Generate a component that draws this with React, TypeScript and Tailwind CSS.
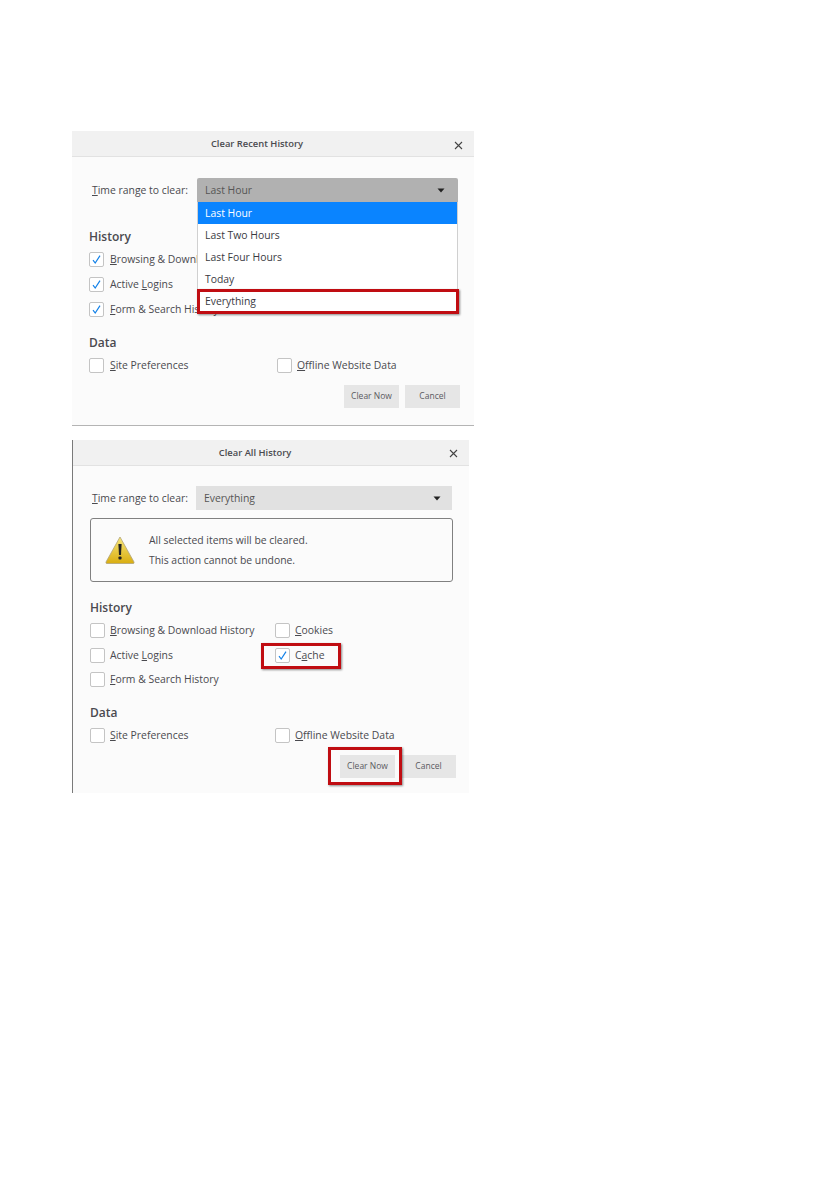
import React from "react";

const font = { fontFamily: '"Open Sans", "Noto Sans", sans-serif' };

function Check({ checked = false }: { checked?: boolean }) {
  return (
    <span className="relative flex h-[15px] w-[15px] shrink-0 items-center justify-center rounded-[2px] border border-[#c4c4c4] bg-white">
      {checked && (
        <svg width="11" height="11" viewBox="0 0 11 11" fill="none">
          <path d="M2 6.2 L4.2 9 L9 1.6" stroke="#1482e8" strokeWidth="1.2" />
        </svg>
      )}
    </span>
  );
}

function Opt({ checked, pre, u, post, w, tight }: { checked?: boolean; pre?: string; u: string; post: string; w: string; tight?: boolean }) {
  return (
    <div className={`flex items-center ${tight ? "gap-[5px]" : "gap-[6px]"} ${w}`}>
      <Check checked={checked} />
      <span className="whitespace-nowrap text-[10.4px] leading-[15px] text-[#4a4a4f]">
        {pre}
        <span className="underline">{u}</span>
        {post}
      </span>
    </div>
  );
}

function Header({ title }: { title: string }) {
  return (
    <div className="relative flex h-[26px] items-center justify-center border-b border-[#e2e2e2] bg-[#f1f1f1] pr-[32px] pt-[2px]">
      <span className="text-[9.4px] font-semibold text-[#4a4a4f]">{title}</span>
    </div>
  );
}

function Close({ cls }: { cls: string }) {
  return (
    <svg className={`absolute ${cls}`} width="9" height="9" viewBox="0 0 9 9" fill="none">
      <path d="M1 1 L8 8 M8 1 L1 8" stroke="#444" strokeWidth="1.1" />
    </svg>
  );
}

function Caret() {
  return (
    <svg width="8" height="5" viewBox="0 0 8 5">
      <path d="M0.5 0.5 H7.5 L4 4.5 Z" fill="#222" />
    </svg>
  );
}

function Btn({ label }: { label: string }) {
  return (
    <span className="flex h-[23px] w-[55px] items-center justify-center bg-[#e6e6e6] text-[8.5px] text-[#5a5a5f]">
      {label}
    </span>
  );
}

function Label() {
  return (
    <span className="block whitespace-nowrap text-[10.4px] leading-[15px] text-[#4a4a4f]">
      <span className="underline">T</span>ime range to clear:
    </span>
  );
}

function Heading({ children }: { children: string }) {
  return <div className="text-[12px] font-semibold leading-[16px] text-[#4a4a4f]">{children}</div>;
}

export default function App() {
  return (
    <div className="h-[1191px] w-[839px] bg-white pl-[72px] pt-[131px]" style={font}>
      {/* First dialog */}
      <div className="w-[402px]">
        <div className="relative h-[294px] bg-[#fbfbfb]">
          <Header title="Clear Recent History" />
          <Close cls="left-[382px] top-[10px]" />
          <div className="pl-[17px] pt-[21px]">
            <div className="flex h-[24px] items-center gap-[9px]">
              <span className="w-[99px] pl-[3px]"><Label /></span>
              <div className="flex h-[24px] w-[261px] items-center justify-between rounded-t-[2px] bg-[#b1b1b1] pl-[8px] pr-[13px] pt-[1px] text-[10.4px] text-[#555]">
                <span>Last Hour</span>
                <Caret />
              </div>
            </div>
            <div className="mt-[27px]"><Heading>History</Heading></div>
            <div className="mt-[7px] flex flex-col gap-[10px]">
              <Opt checked u="B" post="rowsing & Download History" w="" />
              <Opt checked pre="Active " u="L" post="ogins" w="" />
              <Opt checked u="F" post="orm & Search History" w="" />
            </div>
            <div className="mt-[18px]"><Heading>Data</Heading></div>
            <div className="mt-[7px] flex">
              <Opt u="S" post="ite Preferences" w="w-[188px]" />
              <Opt u="O" post="ffline Website Data" w="" tight />
            </div>
            <div className="mt-[12px] flex justify-end gap-[6px] pr-[14px]">
              <Btn label="Clear Now" />
              <Btn label="Cancel" />
            </div>
          </div>
          {/* open dropdown */}
          <div className="absolute left-[125px] top-[71px] w-[261px] border-x border-b border-[#d0d0d0] bg-white text-[10.4px] text-[#3a3a3f]">
            <div className="flex h-[22px] items-center bg-[#0a84ff] pl-[7px] pt-[2px] text-white">Last Hour</div>
            <div className="flex h-[22px] items-center pl-[7px] pt-[2px]">Last Two Hours</div>
            <div className="flex h-[22px] items-center pl-[7px] pt-[2px]">Last Four Hours</div>
            <div className="flex h-[22px] items-center pl-[7px] pt-[2px]">Today</div>
            <div className="flex h-[22px] items-center pl-[7px] pt-[2px]">Everything</div>
          </div>
          <div className="absolute left-[125px] top-[158px] h-[25px] w-[262px] border-[3px] border-[#c00d12] shadow-[1px_1px_2px_rgba(0,0,0,0.45)]" />
        </div>
        <div className="h-px bg-[#b4b4b4]" />
      </div>

      {/* Second dialog */}
      <div className="mt-[14px] w-[397px] border-l border-[#7a7a7a]">
        <div className="relative h-[353px] bg-[#fbfbfb]">
          <Header title="Clear All History" />
          <Close cls="left-[376px] top-[9px]" />
          <div className="pl-[17px] pr-[17px] pt-[20px]">
            <div className="flex h-[24px] items-center gap-[9px]">
              <span className="w-[97px] pl-[2px]"><Label /></span>
              <div className="flex h-[24px] w-[256px] items-center justify-between bg-[#e1e1e1] pl-[8px] pr-[11px] pt-[1px] text-[10.4px] text-[#555]">
                <span>Everything</span>
                <Caret />
              </div>
            </div>
            <div className="mt-[8px] flex h-[64px] w-[363px] items-center rounded-[3px] border border-[#808080] pl-[13px]">
              <svg width="32" height="30" viewBox="0 0 32 30">
                <defs>
                  <linearGradient id="warn" x1="0" y1="0" x2="0" y2="1">
                    <stop offset="0" stopColor="#f8e77a" />
                    <stop offset="1" stopColor="#d9ad10" />
                  </linearGradient>
                </defs>
                <path d="M16 2 L30 27 Q30.5 28.5 29 28.5 H3 Q1.5 28.5 2 27 Z" fill="url(#warn)" stroke="#b0a37a" strokeWidth="0.8" strokeLinejoin="round" />
                <path d="M14.4 9 H17.6 L17 20 H15 Z" fill="#222" />
                <rect x="14.5" y="21.5" width="3" height="3" rx="0.8" fill="#222" />
              </svg>
              <div className="ml-[13px] text-[10.4px] leading-[20px] text-[#4a4a4f]">
                <div>All selected items will be cleared.</div>
                <div>This action cannot be undone.</div>
              </div>
            </div>
            <div className="mt-[18px]"><Heading>History</Heading></div>
            <div className="mt-[7px] flex flex-col gap-[9.5px]">
              <div className="flex">
                <Opt u="B" post="rowsing & Download History" w="w-[185px]" tight />
                <Opt u="C" post="ookies" w="" tight />
              </div>
              <div className="relative flex">
                <Opt pre="Active " u="L" post="ogins" w="w-[185px]" tight />
                <Opt checked pre="C" u="a" post="che" w="" tight />
                <div className="absolute left-[171px] top-[-5px] h-[26px] w-[80px] border-[3px] border-[#c00d12] shadow-[1px_1px_2px_rgba(0,0,0,0.45)]" />
              </div>
              <Opt u="F" post="orm & Search History" w="" tight />
            </div>
            <div className="mt-[18px]"><Heading>Data</Heading></div>
            <div className="mt-[7px] flex">
              <Opt u="S" post="ite Preferences" w="w-[185px]" tight />
              <Opt u="O" post="ffline Website Data" w="" tight />
            </div>
            <div className="relative -mr-[4px] mt-[12px] flex justify-end gap-[6px]">
              <Btn label="Clear Now" />
              <Btn label="Cancel" />
              <div className="absolute left-[238px] top-[-8px] h-[38px] w-[74px] border-[3px] border-[#c00d12] shadow-[1px_1px_2px_rgba(0,0,0,0.45)]" />
            </div>
          </div>
        </div>
      </div>
    </div>
  );
}
